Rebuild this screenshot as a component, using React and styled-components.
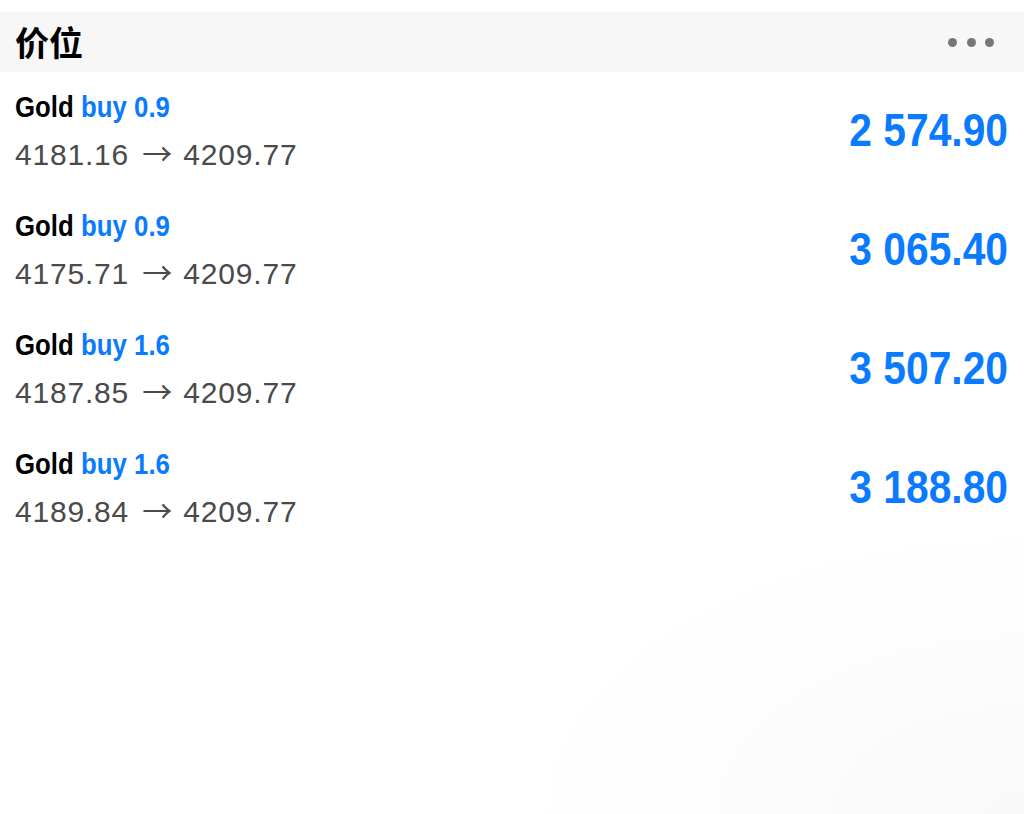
import React from "react";
import styled, { createGlobalStyle } from "styled-components";

const GlobalStyle = createGlobalStyle`
  html, body {
    margin: 0;
    padding: 0;
    background: #ffffff;
  }
  * {
    box-sizing: border-box;
  }
`;

const Page = styled.div`
  min-height: 814px;
  padding-top: 12px;
  background: radial-gradient(
    ellipse 520px 300px at 100% 100%,
    rgba(0, 0, 0, 0.025),
    rgba(0, 0, 0, 0) 100%
  ), #ffffff;
`;

const Header = styled.div`
  height: 60px;
  background: #f7f7f7;
  display: flex;
  align-items: center;
  justify-content: space-between;
  padding: 0 30px 0 15px;
`;

const Title = styled.h1`
  margin: 0;
  font-family: "Noto Sans CJK SC", sans-serif;
  font-size: 34px;
  font-weight: 700;
  color: #000;
  line-height: 1;
`;

const More = styled.div`
  display: flex;
  gap: 9.5px;
  align-items: center;

  span {
    width: 9px;
    height: 9px;
    border-radius: 50%;
    background: #777777;
  }
`;

const List = styled.ul`
  list-style: none;
  margin: 0;
  padding: 0;
`;

const Row = styled.li`
  height: 119px;
  display: flex;
  align-items: center;
  justify-content: space-between;
  padding: 0 16px 0 15px;
`;

const Info = styled.div`
  display: flex;
  flex-direction: column;
  align-items: flex-start;
  gap: 10px;
`;

/* no condensed face installed, so narrow the bold face instead */
const Name = styled.div`
  font-family: "Liberation Sans", Arial, sans-serif;
  font-weight: 700;
  font-size: 29px;
  line-height: 34px;
  color: #000;
  transform: scaleX(0.89);
  transform-origin: left center;

  em {
    font-style: normal;
    color: #0a7aff;
  }
`;

const Prices = styled.div`
  font-family: "Liberation Sans", Arial, sans-serif;
  font-size: 30px;
  line-height: 36px;
  letter-spacing: 0.8px;
  color: #4a4a4c;
`;

const Arrow = styled.span`
  font-family: "Noto Sans CJK SC", sans-serif;
  letter-spacing: 0;
  margin: 0 2px 0 4px;
`;

const Profit = styled.div`
  font-family: "Liberation Sans", Arial, sans-serif;
  font-weight: 700;
  font-size: 47px;
  line-height: 56px;
  color: #0a7aff;
  margin-top: -3px;
  transform: scaleX(0.867);
  transform-origin: right center;
`;

const positions = [
  { side: "buy", volume: "0.9", open: "4181.16", current: "4209.77", profit: "2 574.90" },
  { side: "buy", volume: "0.9", open: "4175.71", current: "4209.77", profit: "3 065.40" },
  { side: "buy", volume: "1.6", open: "4187.85", current: "4209.77", profit: "3 507.20" },
  { side: "buy", volume: "1.6", open: "4189.84", current: "4209.77", profit: "3 188.80" },
];

const App = () => {
  return (
    <Page>
      <GlobalStyle />
      <Header>
        <Title>价位</Title>
        <More>
          <span />
          <span />
          <span />
        </More>
      </Header>
      <List>
        {positions.map((p, index) => (
          <Row key={index}>
            <Info>
              <Name>
                Gold <em>{p.side} {p.volume}</em>
              </Name>
              <Prices>
                {p.open} <Arrow>→</Arrow> {p.current}
              </Prices>
            </Info>
            <Profit>{p.profit}</Profit>
          </Row>
        ))}
      </List>
    </Page>
  );
};

export default App;
